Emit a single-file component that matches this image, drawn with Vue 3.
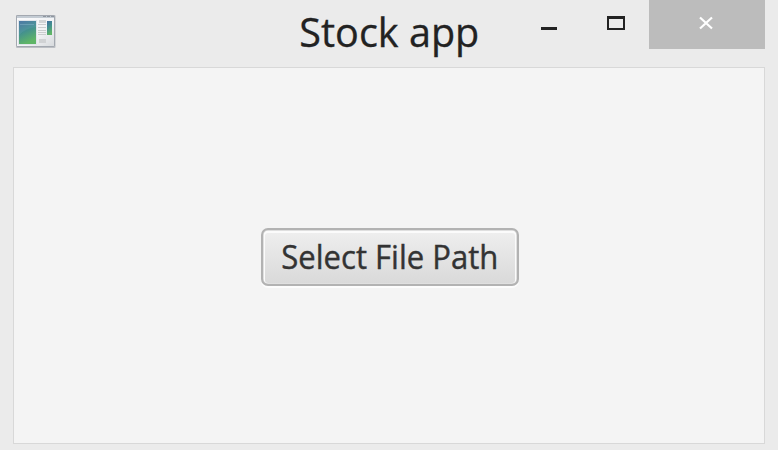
<script setup>
const title = 'Stock app'
const action = 'Select File Path'
const lines = [24, 27, 30, 32, 34]
</script>

<template>
  <div class="window">
    <header class="bar">
      <svg class="app-icon" width="40" height="34" viewBox="16 14 40 34">
        <defs>
          <linearGradient id="pane" x1="0" y1="0" x2="0.35" y2="1">
            <stop offset="0" stop-color="#416d9e" />
            <stop offset="0.5" stop-color="#43908f" />
            <stop offset="1" stop-color="#5fb567" />
          </linearGradient>
          <linearGradient id="sheet" x1="0" y1="0" x2="1" y2="1">
            <stop offset="0" stop-color="#fafafc" />
            <stop offset="0.6" stop-color="#f2f3f5" />
            <stop offset="1" stop-color="#d6d9dc" />
          </linearGradient>
        </defs>
        <rect x="16" y="15" width="39.5" height="33" rx="1" fill="#bcbfc4" />
        <rect x="16.5" y="15.5" width="38" height="31" rx="0.6" fill="url(#sheet)" stroke="#a3a8b0" />
        <rect x="17" y="16" width="37" height="2" fill="#c3cbd3" />
        <path d="M43 16.5H54" stroke="#8f969f" stroke-dasharray="3 1" />
        <rect x="18" y="20" width="19" height="25" fill="#dfe4e9" />
        <rect x="19" y="21" width="17" height="23" fill="url(#pane)" />
        <path d="M20 24.5H34" stroke="#78a9c0" stroke-width="0.6" />
        <path d="M19 21H36V27Q26 28 19 35Z" fill="#9ec4de" opacity="0.12" />
        <rect x="39" y="20" width="7" height="3" fill="#d3d5d7" />
        <path v-for="y in lines" :key="y" :d="`M38 ${y + 0.5}H46`" stroke="#c6c8cb" stroke-width="0.9" />
        <rect x="39" y="39" width="7" height="4" fill="#d0d2d4" />
        <rect x="47" y="21" width="5" height="14" fill="url(#pane)" />
      </svg>
      <h1 class="title">
        <svg width="190" height="60">
          <text class="title-text" x="4.3" y="47.3" textLength="180" lengthAdjust="spacingAndGlyphs">{{ title }}</text>
        </svg>
      </h1>
      <div class="controls">
        <button class="minimize" aria-label="Minimize"><i></i></button>
        <button class="maximize" aria-label="Maximize"><i></i></button>
        <button class="close" aria-label="Close">
          <svg width="14" height="12" viewBox="0 0 14 12">
            <path d="M1 0.5L13 11.5M13 0.5L1 11.5" stroke="#fff" stroke-width="2.2" />
          </svg>
        </button>
      </div>
    </header>
    <main class="content">
      <button class="select">
        <svg width="224" height="46">
          <text class="select-text" x="3.3" y="34.7" textLength="217" lengthAdjust="spacingAndGlyphs">{{ action }}</text>
        </svg>
      </button>
    </main>
  </div>
</template>

<style>
body {
  margin: 0;
}
</style>

<style scoped>
.window {
  box-sizing: border-box;
  width: 778px;
  height: 450px;
  padding: 0 13px 6px;
  display: flex;
  flex-direction: column;
  background: #ebebeb;
  overflow: hidden;
  font-family: "Open Sans", "Noto Sans", sans-serif;
}
svg {
  display: block;
  overflow: visible;
}
button {
  box-sizing: border-box;
  margin: 0;
  padding: 0;
  border: 0;
  background: none;
  font: inherit;
}
.bar {
  display: flex;
  align-items: flex-start;
  height: 67px;
  flex: none;
}
.app-icon {
  margin: 14px 0 0 3px;
  flex: none;
}
.title {
  margin: 0 0 0 239px;
  font-weight: 400;
}
.title-text {
  font-size: 40px;
  fill: #222;
  stroke: #222;
  stroke-width: 0.3px;
}
.controls {
  display: flex;
  margin-left: auto;
}
.minimize,
.maximize {
  display: flex;
  justify-content: center;
  height: 49px;
}
.minimize {
  width: 66px;
  padding: 27px 0 0;
}
.minimize i {
  width: 16px;
  height: 3px;
  background: #222;
}
.maximize {
  width: 67px;
  padding-top: 16px;
}
.maximize i {
  box-sizing: border-box;
  width: 18px;
  height: 14px;
  border: 2px solid #222;
  border-top-width: 3px;
}
.close {
  display: flex;
  justify-content: center;
  width: 116px;
  height: 49px;
  padding: 17px 2px 0 0;
  background: #bcbcbc;
}
.content {
  box-sizing: border-box;
  width: 752px;
  flex: 1;
  border: 1px solid #d8d8d8;
  background: #f4f4f4;
  display: flex;
  justify-content: center;
  padding: 160px 0 0 2px;
}
.select {
  display: flex;
  justify-content: center;
  align-items: flex-start;
  width: 258px;
  height: 58px;
  padding-top: 4px;
  border: 2px solid #b2b2b2;
  border-radius: 7px;
  background: linear-gradient(#efefef, #d9d9d9);
  box-shadow: inset 0 0 0 0.5px #c4c4c4, inset 0 1px 0 2px #fbfbfb, 0 2px 0 #fcfcfc;
}
.select-text {
  font-size: 32px;
  fill: #333;
  stroke: #333;
  stroke-width: 0.4px;
}
</style>
